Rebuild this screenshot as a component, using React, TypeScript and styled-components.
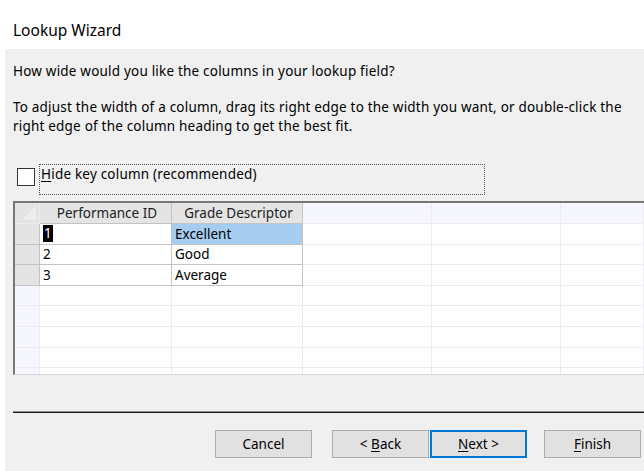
import React from "react";
import styled, { createGlobalStyle } from "styled-components";

const GlobalStyle = createGlobalStyle`
  html, body {
    margin: 0;
    padding: 0;
    background: #ffffff;
  }
  * {
    box-sizing: border-box;
  }
`;

const uiFont = `"Noto Sans", "Open Sans", sans-serif`;

const Window = styled.div`
  width: 644px;
  height: 471px;
  display: flex;
  flex-direction: column;
  font-family: ${uiFont};
  color: #000;
  overflow: hidden;
`;

const TitleBar = styled.div`
  height: 49px;
  padding: 20px 0 0 13px;
  font-size: 15.5px;
  line-height: 20px;
  background: #fff;
`;

const Body = styled.div`
  flex: 1;
  margin-left: 5px;
  background: #f0f0f0;
  display: flex;
  flex-direction: column;
  padding: 13px 0 0 8px;
  font-size: 13.5px;
  letter-spacing: 0.2px;
`;

const Prompt = styled.p`
  margin: 0;
  line-height: 18px;
`;

const Hint = styled.p`
  margin: 18px 0 0;
  line-height: 19px;
  padding-right: 10px;
`;

const CheckRow = styled.label`
  display: flex;
  align-items: flex-start;
  margin: 28px 0 0 4px;
  height: 31px;
`;

const Box = styled.span`
  flex: 0 0 18px;
  height: 18px;
  margin-top: 4px;
  border: 1px solid #333;
  background: #fff;
  margin-right: 4px;
`;

const FocusLabel = styled.span`
  flex: 0 0 446px;
  height: 31px;
  border: 1px dotted #555;
  padding: 0 0 0 1px;
  line-height: 19px;
`;

const Key = styled.u`
  text-decoration: underline;
  text-underline-offset: 2px;
`;

const Sheet = styled.div`
  margin: 6px 0 0 0;
  height: 174px;
  border-top: 2px solid #777;
  border-left: 2px solid #777;
  border-bottom: 1px solid #d8d8d8;
  background: #fff;
  overflow: hidden;
  display: grid;
  grid-template-columns: 25px 132px 131px 129px 129px 1fr;
  grid-template-rows: 21px;
  grid-auto-rows: 20.6px;
  font-size: 13.5px;
  letter-spacing: 0;
`;

type CellProps = {
  $kind: "corner" | "head" | "headEmpty" | "sel" | "selEmpty" | "data" | "empty";
  $hot?: boolean;
};

const framed = (k: CellProps["$kind"]) => k === "data" || k === "head" || k === "sel";

const Cell = styled.div<CellProps>`
  display: flex;
  align-items: center;
  padding-left: 3px;
  white-space: nowrap;
  border-right: 1px solid ${({ $kind }) => (framed($kind) ? "#c4c4c4" : "#ececf0")};
  border-bottom: 1px solid ${({ $kind }) => (framed($kind) ? "#c4c4c4" : "#ececf0")};
  background: ${({ $kind, $hot }) =>
    $hot
      ? "#a6cdf0"
      : $kind === "corner" || $kind === "head" || $kind === "sel"
      ? "#e4e4e4"
      : $kind === "headEmpty" || $kind === "selEmpty"
      ? "#f6f7fe"
      : "#fff"};
  justify-content: ${({ $kind }) => ($kind === "head" ? "center" : "flex-start")};
  color: ${({ $kind }) => ($kind === "head" ? "#222" : "#000")};
`;

const Caret = styled.span`
  background: #000;
  color: #fff;
  padding: 0 1px;
  line-height: 17px;
`;

const Rule = styled.div`
  margin: 36px 0 0;
  height: 2px;
  border-top: 1px solid #8a8a8a;
  border-bottom: 1px solid #1c1c1c;
`;

const Buttons = styled.div`
  display: flex;
  justify-content: flex-end;
  margin-top: 17px;
  padding-right: 3px;
`;

const Btn = styled.button<{ $gap?: number; $default?: boolean }>`
  width: 97px;
  height: 28px;
  margin-left: ${({ $gap }) => $gap ?? 0}px;
  font-family: ${uiFont};
  font-size: 13.5px;
  color: #000;
  background: #e1e1e1;
  border: ${({ $default }) => ($default ? "2px solid #0078d7" : "1px solid #adadad")};
  padding: 0;
`;

const Corner = () => (
  <svg width="20" height="18" viewBox="0 0 20 18">
    <path d="M18 2 L18 16 L4 16 Z" fill="#ededed" />
  </svg>
);

const rows = [
  ["1", "Excellent"],
  ["2", "Good"],
  ["3", "Average"],
];

export default function App() {
  return (
    <Window>
      <GlobalStyle />
      <TitleBar>Lookup Wizard</TitleBar>
      <Body>
        <Prompt>How wide would you like the columns in your lookup field?</Prompt>
        <Hint>
          To adjust the width of a column, drag its right edge to the width you want, or double-click the
          right edge of the column heading to get the best fit.
        </Hint>
        <CheckRow>
          <Box />
          <FocusLabel>
            <Key>H</Key>ide key column (recommended)
          </FocusLabel>
        </CheckRow>
        <Sheet>
          <Cell $kind="corner">
            <Corner />
          </Cell>
          <Cell $kind="head">Performance ID</Cell>
          <Cell $kind="head">Grade Descriptor</Cell>
          <Cell $kind="headEmpty" />
          <Cell $kind="headEmpty" />
          <Cell $kind="headEmpty" />
          {rows.map(([id, grade], i) => (
            <React.Fragment key={id}>
              <Cell $kind="sel" />
              <Cell $kind="data">{i === 0 ? <Caret>{id}</Caret> : id}</Cell>
              <Cell $kind="data" $hot={i === 0}>
                {grade}
              </Cell>
              <Cell $kind="empty" />
              <Cell $kind="empty" />
              <Cell $kind="empty" />
            </React.Fragment>
          ))}
          {Array.from({ length: 5 }).map((_, r) => (
            <React.Fragment key={r}>
              <Cell $kind="selEmpty" />
              <Cell $kind="empty" />
              <Cell $kind="empty" />
              <Cell $kind="empty" />
              <Cell $kind="empty" />
              <Cell $kind="empty" />
            </React.Fragment>
          ))}
        </Sheet>
        <Rule />
        <Buttons>
          <Btn>Cancel</Btn>
          <Btn $gap={20}>
            &lt; <Key>B</Key>ack
          </Btn>
          <Btn $gap={1} $default>
            <Key>N</Key>ext &gt;
          </Btn>
          <Btn $gap={17}>
            <Key>F</Key>inish
          </Btn>
        </Buttons>
      </Body>
    </Window>
  );
}
